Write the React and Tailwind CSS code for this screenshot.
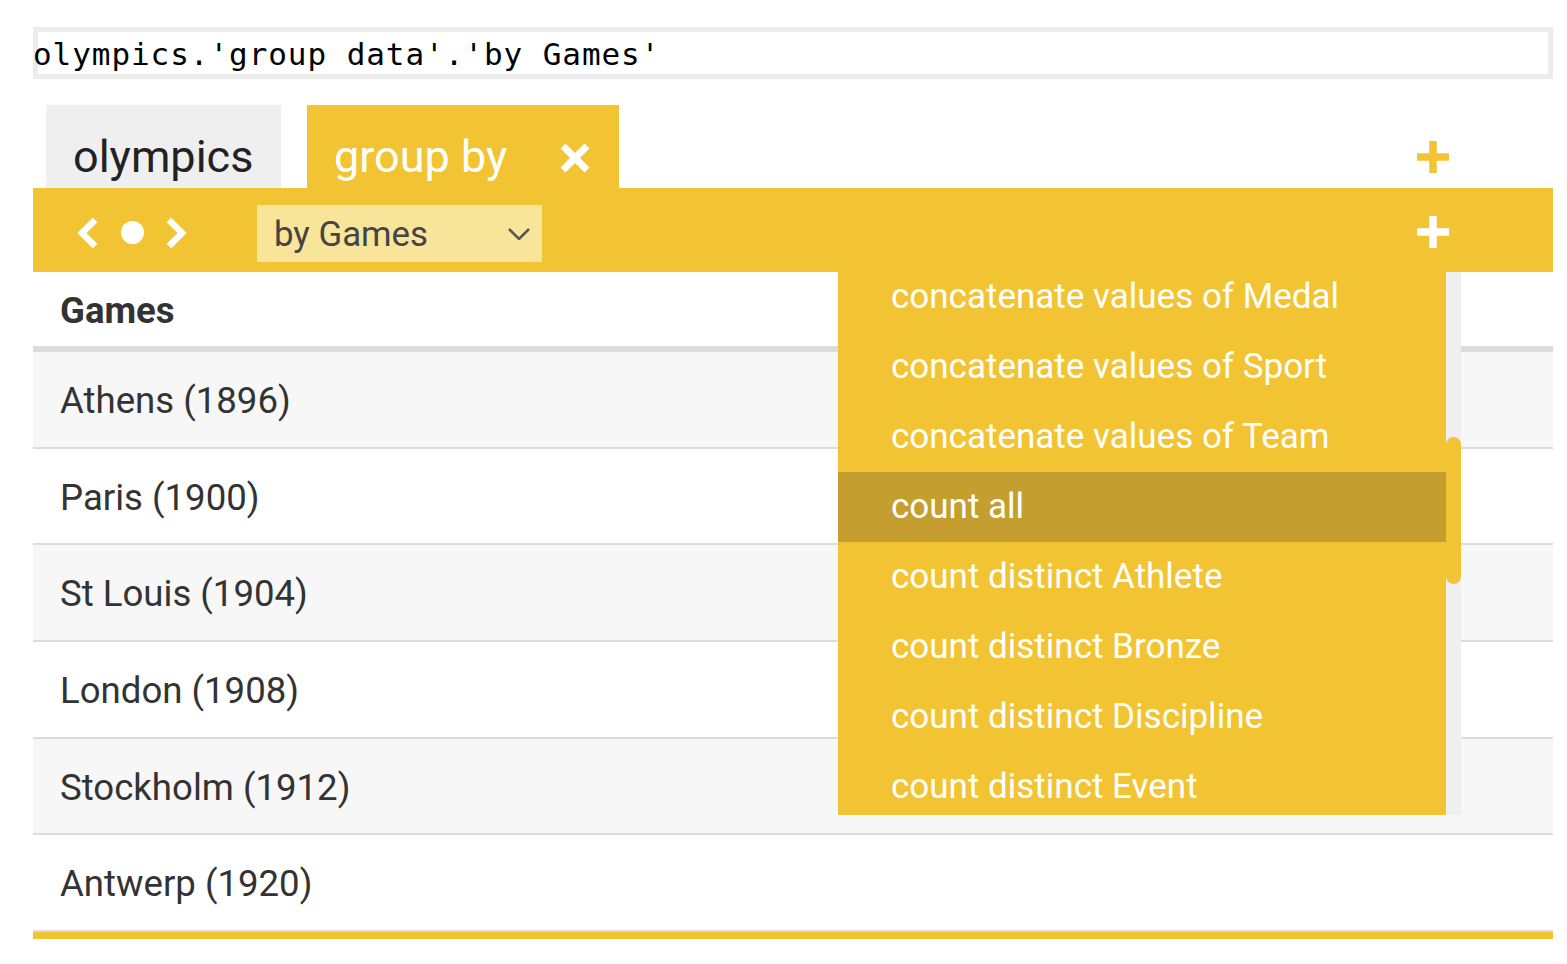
export default function App() {
  const rows = [
    "Athens (1896)",
    "Paris (1900)",
    "St Louis (1904)",
    "London (1908)",
    "Stockholm (1912)",
    "Antwerp (1920)",
  ];
  const items = [
    "concatenate values of Medal",
    "concatenate values of Sport",
    "concatenate values of Team",
    "count all",
    "count distinct Athlete",
    "count distinct Bronze",
    "count distinct Discipline",
    "count distinct Event",
  ];
  return (
    <div className="w-full h-[964px] bg-white overflow-hidden pl-[33px] pr-[14px] font-[Roboto,sans-serif]">
      {/* code bar */}
      <div className="mt-[27px] h-[52px] border-[5px] border-[#ececec] bg-white flex items-center">
        <div className="-ml-[5px] pt-[1px] font-['DejaVu_Sans_Mono',monospace] text-[31px] tracking-[0.94px] leading-[42px] text-black whitespace-pre">
          olympics.'group data'.'by Games'
        </div>
      </div>

      {/* tabs */}
      <div className="mt-[26px] h-[83px] flex items-end pl-[13px]">
        <div className="w-[235px] h-[83px] bg-[#efefef] pl-[27px] pt-[25px] text-[45px] leading-[53px] text-[#222]">
          olympics
        </div>
        <div className="ml-[26px] w-[312px] h-[83px] bg-[#f2c433] pl-[27px] pt-[25px] flex items-start">
          <span className="text-[45px] leading-[53px] text-white">group by</span>
          <svg className="ml-[52px] mt-[12px]" width="32" height="32" viewBox="0 0 32 32">
            <path d="M4 4 L28 28 M28 4 L4 28" stroke="white" strokeWidth="7" />
          </svg>
        </div>
        <div className="flex-1" />
        <div className="mr-[104px] mb-[15px]">
          <svg width="32" height="32" viewBox="0 0 32 32">
            <path d="M16 0 V32 M0 16 H32" stroke="#f2c433" strokeWidth="7.5" />
          </svg>
        </div>
      </div>

      {/* toolbar */}
      <div className="h-[84px] bg-[#f2c433] flex items-center pl-[44px] pr-[104px]">
        <div className="flex items-center pt-[5px]">
          <svg width="21" height="30" viewBox="0 0 21 30">
            <polyline points="18,2 5,15 18,28" fill="none" stroke="white" strokeWidth="6.5" />
          </svg>
          <div className="ml-[23px] w-[23px] h-[23px] rounded-full bg-white" />
          <svg className="ml-[22px]" width="21" height="30" viewBox="0 0 21 30">
            <polyline points="3,2 16,15 3,28" fill="none" stroke="white" strokeWidth="6.5" />
          </svg>
        </div>
        <div className="ml-[70px] mt-[7px] w-[285px] h-[57px] bg-[#f9e59a] flex items-center pl-[17px] pr-[12px]">
          <span className="text-[34.8px] leading-[40px] text-[#444] pt-[1px]">by Games</span>
          <div className="flex-1" />
          <svg width="22" height="12" viewBox="0 0 22 12">
            <polyline points="1,1 11,11 21,1" fill="none" stroke="#555" strokeWidth="2.5" />
          </svg>
        </div>
        <div className="flex-1" />
        <svg className="mt-[4px]" width="32" height="32" viewBox="0 0 32 32">
          <path d="M16 0 V32 M0 16 H32" stroke="white" strokeWidth="7.5" />
        </svg>
      </div>

      {/* table */}
      <div className="relative">
        <div className="h-[80px] border-b-[6px] border-[#dcdcdc] flex items-center pl-[27px] pt-[4px] text-[36.5px] font-bold text-[#333]">
          Games
        </div>
        {rows.map((r, i) => (
          <div
            key={r}
            className={
              "h-[96.67px] border-b-2 border-[#dcdcdc] flex items-center pl-[27px] pt-[4px] text-[36.6px] text-[#333] " +
              (i % 2 === 0 ? "bg-[#f7f7f7]" : "bg-white")
            }
          >
            {r}
          </div>
        ))}
        <div className="h-[7px] bg-[#f2c433]" />

        {/* dropdown */}
        <div className="absolute left-[805px] top-0 w-[623px] h-[543px] flex">
          <div className="w-[608px] h-full bg-[#f2c433] overflow-hidden">
            <div className="-mt-[10px]">
              {items.map((it) => (
                <div
                  key={it}
                  className={
                    "h-[70px] flex items-center pl-[53px] text-[35px] text-white " +
                    (it === "count all" ? "bg-[#c49f30]" : "")
                  }
                >
                  {it}
                </div>
              ))}
            </div>
          </div>
          <div className="w-[15px] h-full bg-[#efefef] pt-[165px]">
            <div className="w-[15px] h-[147px] rounded-full bg-[#f2c433]" />
          </div>
        </div>
      </div>
    </div>
  );
}
